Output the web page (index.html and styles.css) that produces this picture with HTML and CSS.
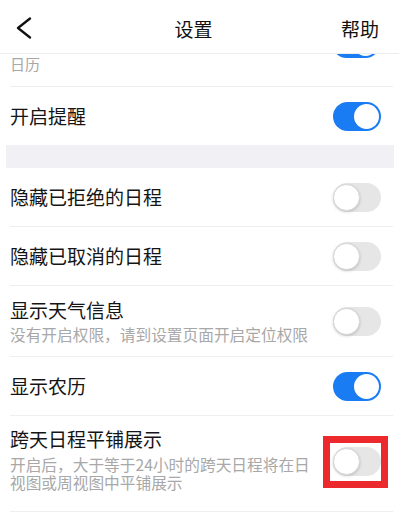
FILE: index.html
```html
<!DOCTYPE html>
<html lang="zh-CN">
<head>
<meta charset="utf-8">
<title>设置</title>
<link rel="stylesheet" href="styles.css">
</head>
<body>
<div class="page">
  <header class="header">
    <div class="back">
      <svg width="16" height="22" viewBox="0 0 16 22"><path d="M14 1.5 L2 11 L14 20.5" fill="none" stroke="#111" stroke-width="2.3" stroke-linecap="round" stroke-linejoin="round"/></svg>
    </div>
    <div class="title">设置</div>
    <div class="help">帮助</div>
  </header>

  <div class="partial">
    <div class="partial-text">日历</div>
    <div class="toggle on partial-toggle"><span class="knob"></span></div>
  </div>

  <div class="row last-in-group">
    <div class="text"><div class="label">开启提醒</div></div>
    <div class="toggle on"><span class="knob"></span></div>
  </div>

  <div class="band"></div>

  <div class="row">
    <div class="text"><div class="label">隐藏已拒绝的日程</div></div>
    <div class="toggle"><span class="knob"></span></div>
  </div>

  <div class="row">
    <div class="text"><div class="label">隐藏已取消的日程</div></div>
    <div class="toggle"><span class="knob"></span></div>
  </div>

  <div class="row tall">
    <div class="text">
      <div class="label">显示天气信息</div>
      <div class="sub">没有开启权限，请到设置页面开启定位权限</div>
    </div>
    <div class="toggle"><span class="knob"></span></div>
  </div>

  <div class="row">
    <div class="text"><div class="label">显示农历</div></div>
    <div class="toggle on"><span class="knob"></span></div>
  </div>

  <div class="row multi">
    <div class="text">
      <div class="label">跨天日程平铺展示</div>
      <div class="sub">开启后，大于等于24小时的跨天日程将在日视图或周视图中平铺展示</div>
    </div>
    <div class="toggle marked"><span class="knob"></span><span class="frame"></span></div>
  </div>
</div>
</body>
</html>
```

FILE: styles.css
```css
* { box-sizing: border-box; }
html, body { margin: 0; padding: 0; background: #fff; }
body {
  font-family: "Noto Sans CJK SC", "Noto Sans", sans-serif;
  color: #151515;
  width: 399px;
  height: 514px;
  overflow: hidden;
}
.page { width: 399px; }

.header {
  position: relative;
  z-index: 2;
  height: 54px;
  display: grid;
  grid-template-columns: 1fr auto 1fr;
  align-items: center;
  padding: 3px 20px 0 16px;
  border-bottom: 1px solid #ececec;
  background: #fff;
}
.back { display: flex; align-items: center; }
.back svg { display: block; }
.title { font-size: 19px; color: #111; margin-right: 8px; }
.help { font-size: 19px; color: #111; justify-self: end; }

.partial {
  height: 33px;
  margin: 0 6px 0 10px;
  border-bottom: 1px solid #eeeeee;
  display: flex;
  justify-content: space-between;
  align-items: flex-start;
  padding-right: 8px;
}
.partial-text {
  font-size: 15px;
  color: #a8a8a8;
  line-height: 20px;
}
.partial-toggle { margin-top: -25px; margin-right: 5px; }

.row {
  min-height: 59px;
  margin: 0 6px 0 10px;
  padding-right: 12px;
  border-bottom: 1px solid #eeeeee;
  display: flex;
  align-items: center;
  justify-content: space-between;
}
.row.last-in-group { border-bottom: none; min-height: 58px; }
.row.tall { min-height: 71px; }
.row.multi { min-height: 96px; align-items: flex-start; padding-top: 11px; }
.row.multi .toggle { margin-top: 20px; }

.text { max-width: 306px; }
.label { font-size: 19px; line-height: 24px; color: #151515; }
.sub { font-size: 15.7px; line-height: 20px; margin-top: 3px; color: #a8a8a8; }
.row.multi .sub { line-height: 18px; margin-top: 5px; }

.band {
  height: 23px;
  margin: 0 5px 0 6px;
  background: #f1f1f5;
}

.toggle {
  position: relative;
  flex: none;
  width: 48px;
  height: 29px;
  border-radius: 15px;
  background: #e6e6e6;
}
.toggle .knob {
  position: absolute;
  top: 1px;
  left: 0;
  width: 27px;
  height: 27px;
  border-radius: 50%;
  background: #fff;
  border: 1px solid #d6d6d6;
  box-shadow: 0 1px 3px rgba(0,0,0,0.18);
}
.toggle.on { background: #1a7cf2; }
.toggle.on .knob {
  top: 2px;
  left: auto;
  right: 2px;
  width: 25px;
  height: 25px;
  border: none;
  box-shadow: none;
}
.toggle .frame {
  position: absolute;
  top: -11px;
  bottom: -12px;
  left: -10px;
  right: -7px;
  border: 7px solid #ec2a2e;
}
```
